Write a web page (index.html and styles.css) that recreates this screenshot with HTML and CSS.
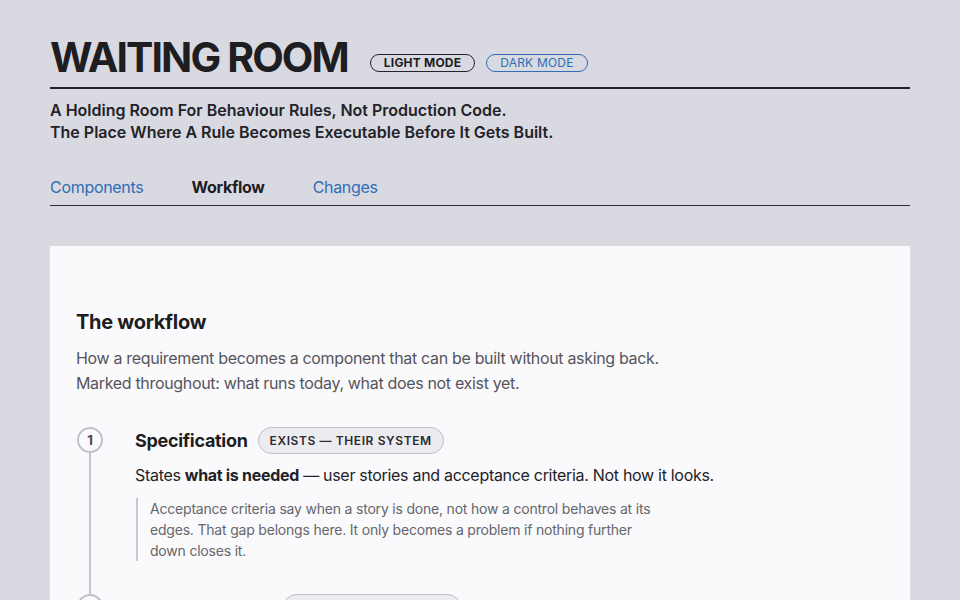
FILE: index.html
```html
<!DOCTYPE html>
<html lang="en">
<head>
<meta charset="utf-8">
<title>Waiting Room</title>
<link rel="stylesheet" href="styles.css">
</head>
<body>
<div class="page">
  <header class="masthead">
    <div class="title-row">
      <h1 class="title">WAITING ROOM</h1>
      <div class="modes">
        <button class="mode mode-active">LIGHT MODE</button>
        <button class="mode">DARK MODE</button>
      </div>
    </div>
    <p class="tagline">A Holding Room For Behaviour Rules, Not Production Code.<br>The Place Where A Rule Becomes Executable Before It Gets Built.</p>
  </header>

  <nav class="tabs">
    <a class="tab" href="#components">Components</a>
    <a class="tab tab-current" href="#workflow">Workflow</a>
    <a class="tab" href="#changes">Changes</a>
  </nav>

  <main class="card">
    <h2 class="card-title">The workflow</h2>
    <p class="lead">How a requirement becomes a component that can be built without asking back.<br>Marked throughout: what runs today, what does not exist yet.</p>

    <ol class="steps">
      <li class="step">
        <div class="rail"><span class="num">1</span></div>
        <div class="step-body">
          <div class="step-head">
            <h3 class="step-name">Specification</h3>
            <span class="badge">EXISTS — THEIR SYSTEM</span>
          </div>
          <p class="step-text">States <strong>what is needed</strong> — user stories and acceptance criteria. Not how it looks.</p>
          <blockquote class="note">Acceptance criteria say when a story is done, not how a control behaves at its edges. That gap belongs here. It only becomes a problem if nothing further down closes it.</blockquote>
        </div>
      </li>
      <li class="step">
        <div class="rail"><span class="num">2</span></div>
        <div class="step-body">
          <div class="step-head">
            <h3 class="step-name">Behaviour Rules</h3>
            <span class="badge">RUNS TODAY — IN HERE</span>
          </div>
          <p class="step-text">Turns each criterion into a rule a component can be checked against.</p>
        </div>
      </li>
    </ol>
  </main>
</div>
</body>
</html>
```

FILE: styles.css
```css
* { box-sizing: border-box; }

html, body {
  margin: 0;
  padding: 0;
  background: #d9d9e1;
  color: #1d1d22;
  font-family: Inter, "Noto Sans", "Liberation Sans", sans-serif;
}

.page {
  width: 860px;
  margin: 0 auto;
  padding-top: 35px;
}

.title-row {
  display: flex;
  align-items: center;
  gap: 22px;
  padding-bottom: 8px;
  border-bottom: 2px solid #222228;
}

.title {
  margin: 0;
  font-size: 41px;
  font-weight: 700;
  letter-spacing: -1.9px;
  line-height: 44px;
}

.modes {
  display: flex;
  gap: 11px;
  padding-top: 11px;
}

.mode {
  font-family: inherit;
  font-size: 12px;
  line-height: 15px;
  padding: 0 13px;
  height: 18px;
  border-radius: 9px;
  background: transparent;
  border: 1px solid #2f6db5;
  color: #2f6db5;
  font-weight: 400;
  letter-spacing: 0.2px;
}

.mode-active {
  border-color: #222228;
  color: #1d1d22;
  font-weight: 700;
}

.tagline {
  margin: 10px 0 0;
  font-size: 16px;
  line-height: 22px;
  font-weight: 600;
  color: #222228;
}

.tabs {
  display: flex;
  gap: 48px;
  margin-top: 33px;
  padding-bottom: 7px;
  border-bottom: 1px solid #2a2a30;
}

.tab {
  font-size: 16px;
  line-height: 22px;
  letter-spacing: -0.3px;
  color: #2f6db5;
  text-decoration: none;
}

.tab-current {
  color: #1d1d22;
  font-weight: 700;
}

.card {
  margin-top: 40px;
  background: #fafafc;
  padding: 61px 26px 40px;
  min-height: 400px;
}

.card-title {
  margin: 0;
  font-size: 20px;
  line-height: 30px;
  font-weight: 700;
  letter-spacing: -0.3px;
  color: #1d1d22;
}

.lead {
  margin: 9px 0 0;
  font-size: 16px;
  line-height: 25px;
  letter-spacing: -0.33px;
  color: #55555c;
}

.steps {
  list-style: none;
  margin: 31px 0 0;
  padding: 0;
}

.step {
  display: flex;
  gap: 31px;
}

.rail {
  width: 28px;
  flex: none;
  display: flex;
  flex-direction: column;
  align-items: center;
}

.rail::after {
  content: "";
  flex: 1;
  width: 2px;
  background: #c4c4cb;
}

.step:last-child .rail::after { display: none; }

.num {
  width: 26px;
  height: 26px;
  flex: none;
  border: 2px solid #c0c0c7;
  border-radius: 50%;
  display: flex;
  align-items: center;
  justify-content: center;
  font-size: 13px;
  font-weight: 700;
  color: #444449;
  background: #fafafc;
}

.step-body {
  padding-bottom: 33px;
}

.step-head {
  display: flex;
  align-items: center;
  gap: 10px;
  height: 26px;
}

.step-name {
  margin: 0;
  font-size: 18px;
  font-weight: 700;
  letter-spacing: -0.3px;
  color: #1d1d22;
}

.badge {
  height: 27px;
  padding: 0 11px;
  display: inline-flex;
  align-items: center;
  border: 1px solid #bdbdc4;
  border-radius: 14px;
  background: #ececf0;
  font-size: 12px;
  font-weight: 600;
  letter-spacing: 0.6px;
  color: #2a2a30;
}

.step-text {
  margin: 10px 0 0;
  font-size: 16px;
  line-height: 24px;
  letter-spacing: -0.3px;
  color: #222228;
}

.step-text strong { font-weight: 700; }

.note {
  margin: 11px 0 0 1px;
  padding: 0 0 0 12px;
  border-left: 2px solid #c8c8cf;
  max-width: 528px;
  font-size: 14px;
  line-height: 21px;
  letter-spacing: -0.2px;
  color: #66666c;
}
```
